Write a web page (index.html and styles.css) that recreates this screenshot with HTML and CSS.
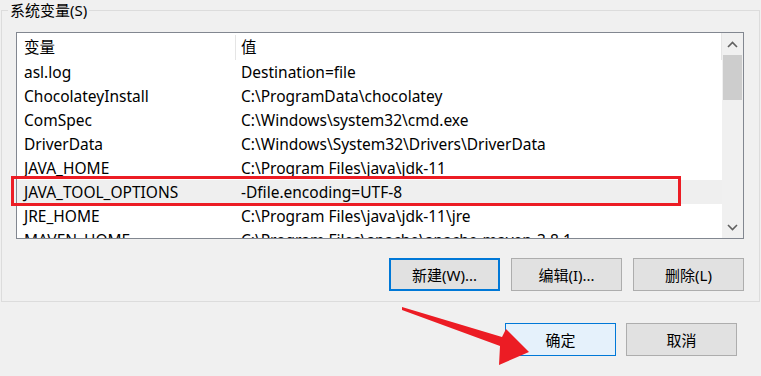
FILE: index.html
```html
<!DOCTYPE html>
<html lang="zh-CN">
<head>
    <meta charset="UTF-8">
    <title>系统变量</title>
    <link rel="stylesheet" href="styles.css">
</head>
<body>

<fieldset class="group">
    <legend>系统变量(S)</legend>

    <div class="listbox">
        <div class="list">
            <div class="list-header">
                <div class="col-name">变量</div>
                <div class="col-value">值</div>
            </div>
            <div class="row"><div class="col-name">asl.log</div><div class="col-value">Destination=file</div></div>
            <div class="row"><div class="col-name">ChocolateyInstall</div><div class="col-value">C:\ProgramData\chocolatey</div></div>
            <div class="row"><div class="col-name">ComSpec</div><div class="col-value">C:\Windows\system32\cmd.exe</div></div>
            <div class="row"><div class="col-name">DriverData</div><div class="col-value">C:\Windows\System32\Drivers\DriverData</div></div>
            <div class="row"><div class="col-name">JAVA_HOME</div><div class="col-value">C:\Program Files\java\jdk-11</div></div>
            <div class="row selected"><div class="col-name">JAVA_TOOL_OPTIONS</div><div class="col-value">-Dfile.encoding=UTF-8</div></div>
            <div class="row"><div class="col-name">JRE_HOME</div><div class="col-value">C:\Program Files\java\jdk-11\jre</div></div>
            <div class="row"><div class="col-name">MAVEN_HOME</div><div class="col-value">C:\Program Files\apache\apache-maven-3.8.1</div></div>
        </div>

        <div class="scrollbar">
            <div class="scroll-arrow">
                <svg width="11" height="7" viewBox="0 0 11 7"><path d="M1 6 L5.5 1.5 L10 6" fill="none" stroke="#606060" stroke-width="1.6"/></svg>
            </div>
            <div class="scroll-track">
                <div class="scroll-thumb"></div>
            </div>
            <div class="scroll-arrow">
                <svg width="11" height="7" viewBox="0 0 11 7"><path d="M1 1 L5.5 5.5 L10 1" fill="none" stroke="#606060" stroke-width="1.6"/></svg>
            </div>
        </div>
    </div>

    <div class="button-row">
        <button class="btn btn-focus">新建(W)...</button>
        <button class="btn">编辑(I)...</button>
        <button class="btn">删除(L)</button>
    </div>
</fieldset>

<div class="dialog-buttons">
    <button class="btn btn-default">确定</button>
    <button class="btn">取消</button>
</div>

<!-- annotations drawn over the screenshot -->
<div class="highlight"></div>
<svg class="arrow" width="761" height="376" viewBox="0 0 761 376">
    <polygon points="402,307 502,337 506,329 529,352 499,365 500,346 402,310" fill="#ec1c24"/>
</svg>

</body>
</html>
```

FILE: styles.css
```css
/* General Reset */
* {
    margin: 0;
    padding: 0;
    box-sizing: border-box;
}

body {
    font-family: "Noto Sans", "Noto Sans CJK SC", sans-serif;
    font-size: 15px;
    background-color: #f0f0f0;
    color: #000;
    width: 761px;
    height: 376px;
    position: relative;
    overflow: hidden;
}

/* Group box */
.group {
    margin-left: 1px;
    width: 759px;
    height: 302px;
    border: 1px solid #dcdcdc;
    padding: 0;
}

.group legend {
    margin-left: 6px;
    padding: 0 2px;
    line-height: 20px;
}

/* List view */
.listbox {
    margin: 12px 0 0 14px;
    width: 728px;
    height: 207px;
    border: 1px solid #828790;
    background-color: #fff;
    display: flex;
    font-size: 15.5px;
}

.list {
    flex: 1;
    overflow: hidden;
}

.list-header {
    display: flex;
    height: 27px;
    padding-top: 2px;
    line-height: 24px;
    border-right: 1px solid #e5e5e5;
}

.list-header .col-name {
    border-right: 1px solid #e5e5e5;
}

.row {
    display: flex;
    height: 24px;
    line-height: 24px;
    white-space: nowrap;
}

.row.selected {
    background-color: #efefef;
}

.col-name {
    width: 219px;
    padding-left: 7px;
    flex-shrink: 0;
}

.col-value {
    padding-left: 5px;
}

/* Scrollbar */
.scrollbar {
    width: 21px;
    background-color: #f0f0f0;
    display: flex;
    flex-direction: column;
}

.scroll-arrow {
    height: 22px;
    display: flex;
    align-items: center;
    justify-content: center;
}

.scroll-track {
    flex: 1;
}

.scroll-thumb {
    margin: 0 1px;
    height: 45px;
    background-color: #cdcdcd;
}

/* Buttons */
.button-row {
    display: flex;
    justify-content: flex-end;
    gap: 11px;
    margin: 19px 15px 0 0;
}

.btn {
    width: 111px;
    height: 33px;
    font-family: "Noto Sans", "Noto Sans CJK SC", sans-serif;
    font-size: 15px;
    color: #000;
    background-color: #e1e1e1;
    border: 1px solid #adadad;
}

.btn-focus {
    border: 2px solid #0078d7;
}

.btn-default {
    background-color: #e5f1fb;
    border: 1px solid #0078d7;
}

.dialog-buttons {
    display: flex;
    justify-content: flex-end;
    gap: 10px;
    margin: 21px 24px 0 0;
}

/* Annotations */
.highlight {
    position: absolute;
    left: 11px;
    top: 176px;
    width: 670px;
    height: 30px;
    border: 3px solid #ec1c24;
}

.arrow {
    position: absolute;
    left: 0;
    top: 0;
}
```
